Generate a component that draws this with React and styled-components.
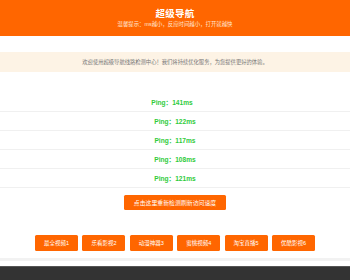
import React from 'react';
import styled, { createGlobalStyle } from 'styled-components';

const GlobalStyle = createGlobalStyle`
  html, body {
    margin: 0;
    padding: 0;
    background: #fff;
    font-family: "Liberation Sans", "Noto Sans CJK SC", sans-serif;
  }
`;

const Page = styled.div`
  width: 350px;
  height: 280px;
  overflow: hidden;
  display: flex;
  flex-direction: column;
`;

const Header = styled.header`
  background: #ff6600;
  height: 36px;
  display: flex;
  flex-direction: column;
  align-items: center;
  justify-content: center;
  color: #fff;
`;

const Title = styled.h1`
  margin: 0;
  font-size: 9.5px;
  font-weight: bold;
  line-height: 12px;
  letter-spacing: 0.3px;
`;

const Tip = styled.p`
  margin: 1px 0 0;
  font-size: 5.4px;
  line-height: 7px;
  color: #ffe7d6;
`;

const Notice = styled.div`
  margin-top: 16px;
  height: 20px;
  background: #fdf3e5;
  display: flex;
  align-items: center;
  justify-content: center;
  font-size: 5.3px;
  color: #777;
`;

const PingList = styled.div`
  margin-top: 21px;
  display: flex;
  flex-direction: column;
`;

const PingRow = styled.div`
  height: 18px;
  border-bottom: 1px solid #f0f0f0;
  display: flex;
  align-items: center;
  justify-content: center;
  padding-right: ${(p) => (p.$shift ? '6px' : '0')};
  font-size: 6.6px;
  font-weight: bold;
  color: #2fcb3a;
`;

const RefreshWrap = styled.div`
  display: flex;
  justify-content: center;
  margin-top: 7px;
`;

const OrangeButton = styled.button`
  border: none;
  background: #ff6600;
  color: #fff;
  font-family: inherit;
  border-radius: 1.5px;
  display: flex;
  align-items: center;
  justify-content: center;
  padding: 0;
  cursor: pointer;
`;

const RefreshButton = styled(OrangeButton)`
  width: 102px;
  height: 15px;
  font-size: 5.9px;
`;

const LinkRow = styled.div`
  display: flex;
  justify-content: center;
  gap: 4.4px;
  margin-top: 25px;
  padding-bottom: 7px;
  border-bottom: 3px solid #f2f2f2;
`;

const LinkButton = styled(OrangeButton)`
  width: 43px;
  height: 16px;
  font-size: 5.5px;
`;

const Footer = styled.footer`
  margin-top: 5px;
  flex: 1;
  background: #333;
  border-top: 1px solid #555;
`;

const pings = ['141', '122', '117', '108', '121'];
const links = ['最全视频1', '乐看影视2', '动漫神器3', '蜜桃视频4', '淘宝直播5', '优酷影视6'];

const App = () => {
  return (
    <Page>
      <GlobalStyle />
      <Header>
        <Title>超级导航</Title>
        <Tip>温馨提示：ms越小，反应时间越小，打开就越快</Tip>
      </Header>
      <Notice>欢迎使用超级导航线路检测中心！我们将持续优化服务，为您提供更好的体验。</Notice>
      <PingList>
        {pings.map((ms, i) => (
          <PingRow key={i} $shift={i === 0}>
            Ping：{ms}ms
          </PingRow>
        ))}
      </PingList>
      <RefreshWrap>
        <RefreshButton>点击这里重新检测刷新访问速度</RefreshButton>
      </RefreshWrap>
      <LinkRow>
        {links.map((name) => (
          <LinkButton key={name}>{name}</LinkButton>
        ))}
      </LinkRow>
      <Footer />
    </Page>
  );
};

export default App;
